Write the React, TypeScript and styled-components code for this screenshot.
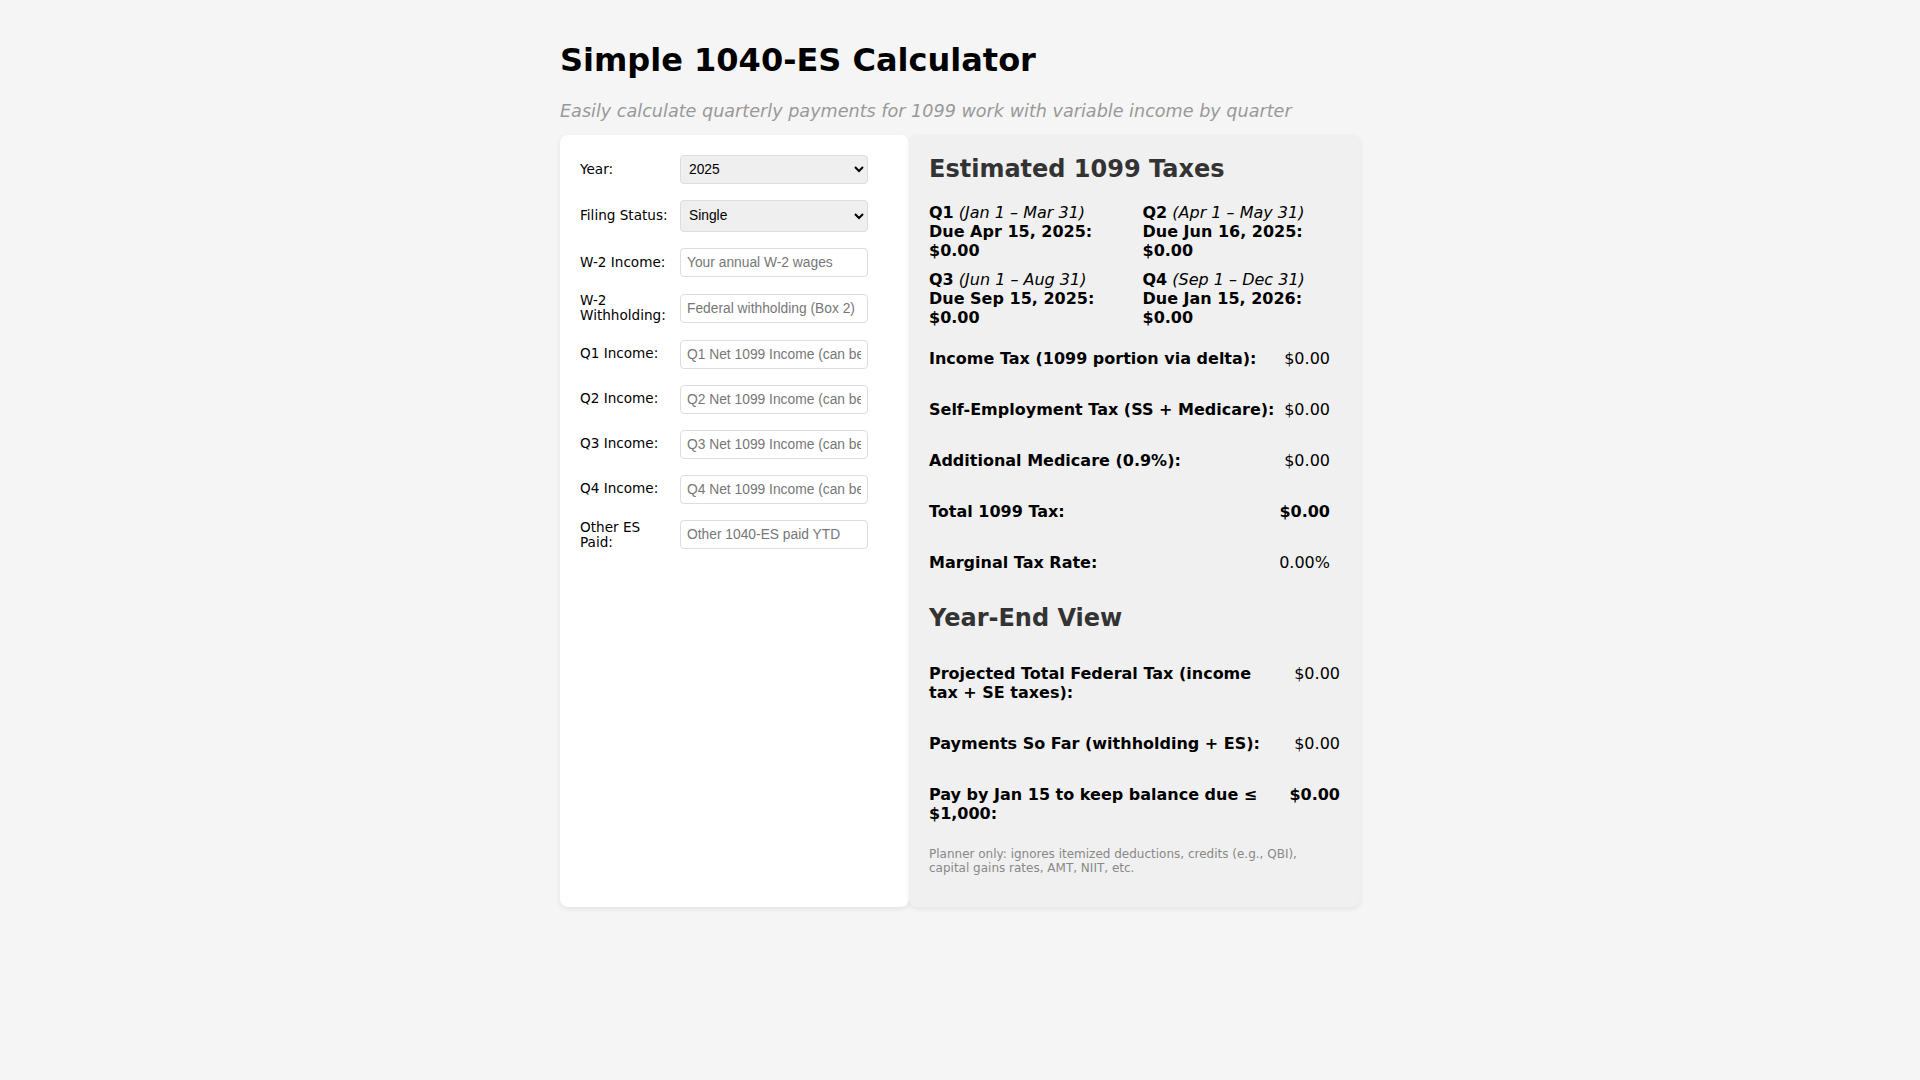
import React from 'react';
import styled, { createGlobalStyle } from 'styled-components';

const GlobalStyle = createGlobalStyle`
  *, *::before, *::after {
    box-sizing: border-box;
  }
  body {
    margin: 0;
    background-color: #f5f5f5;
    font-family: 'DejaVu Sans', sans-serif;
    color: #000;
  }
`;

const Page = styled.div`
  padding: 20px;
`;

const Container = styled.div`
  max-width: 800px;
  margin: 0 auto;
`;

const Title = styled.h1`
  font-size: 32px;
  margin: 0.67em 0;
`;

const Subtitle = styled.p`
  margin: 16px 0 14px;
  color: #999;
  font-style: italic;
  font-size: 17.6px;
`;

const Layout = styled.div`
  display: grid;
  grid-template-columns: 349px 1fr;
  align-items: stretch;
`;

const FormCard = styled.div`
  background-color: #fff;
  padding: 20px;
  border-radius: 8px;
  box-shadow: 0 2px 5px rgba(0, 0, 0, 0.08);
`;

const FieldRow = styled.div`
  display: flex;
  align-items: center;
  margin-bottom: 16px;
`;

const FieldLabel = styled.label`
  width: 90px;
  margin-right: 10px;
  flex-shrink: 0;
  font-size: 13.6px;
  line-height: 1.13;
`;

const Input = styled.input`
  width: 188px;
  height: 29px;
  padding: 0 6px;
  border: 1px solid #ddd;
  border-radius: 4px;
  background-color: #fff;
  font-family: 'Liberation Sans', Arial, sans-serif;
  font-size: 13.8px;
  color: #000;
  &::placeholder {
    color: #777;
  }
`;

const Select = styled.select<{ $tall?: boolean }>`
  width: 188px;
  height: ${(p) => (p.$tall ? '32px' : '29px')};
  padding: 0 4px;
  border: 1px solid #ddd;
  border-radius: 4px;
  background-color: #efefef;
  font-family: 'Liberation Sans', Arial, sans-serif;
  font-size: 13.8px;
  color: #000;
`;

const ResultsPanel = styled.div`
  background-color: #f0f0f0;
  padding: 20px;
  border-radius: 8px;
  box-shadow: 0 2px 5px rgba(0, 0, 0, 0.08);
`;

const SectionTitle = styled.h2`
  font-size: 24px;
  color: #333;
  margin: 0.83em 0;
  &:first-child {
    margin-top: 0;
  }
`;

const QuarterGrid = styled.div`
  display: grid;
  grid-template-columns: 1fr 1fr;
  gap: 10px 16px;
  margin-bottom: 10px;
  font-size: 16px;
`;

const Quarter = styled.div`
  em {
    font-weight: normal;
  }
`;

const DueLine = styled.div`
  font-weight: bold;
`;

const ResultRow = styled.div<{ $trail?: boolean }>`
  display: flex;
  justify-content: space-between;
  padding: 12px ${(p) => (p.$trail ? '10px' : '0')} 12px 0;
  margin: 8px 0;
  font-size: 16px;
`;

const RowLabel = styled.span`
  font-weight: bold;
`;

const RowValue = styled.span<{ $strong?: boolean; $gap: number }>`
  flex-shrink: 0;
  margin-left: ${(p) => p.$gap}px;
  text-align: right;
  font-weight: ${(p) => (p.$strong ? 'bold' : 'normal')};
`;

const Footnote = styled.p`
  margin: 12px 6px 12px 0;
  font-size: 12px;
  color: #888;
`;

const fields = [
  { label: 'W-2 Income:', placeholder: 'Your annual W-2 wages' },
  { label: 'W-2 Withholding:', placeholder: 'Federal withholding (Box 2)' },
  { label: 'Q1 Income:', placeholder: 'Q1 Net 1099 Income (can be negative)' },
  { label: 'Q2 Income:', placeholder: 'Q2 Net 1099 Income (can be negative)' },
  { label: 'Q3 Income:', placeholder: 'Q3 Net 1099 Income (can be negative)' },
  { label: 'Q4 Income:', placeholder: 'Q4 Net 1099 Income (can be negative)' },
  { label: 'Other ES Paid:', placeholder: 'Other 1040-ES paid YTD' },
];

const quarters = [
  { q: 'Q1', range: '(Jan 1 – Mar 31)', due: 'Due Apr 15, 2025:' },
  { q: 'Q2', range: '(Apr 1 – May 31)', due: 'Due Jun 16, 2025:' },
  { q: 'Q3', range: '(Jun 1 – Aug 31)', due: 'Due Sep 15, 2025:' },
  { q: 'Q4', range: '(Sep 1 – Dec 31)', due: 'Due Jan 15, 2026:' },
];

const taxRows = [
  { label: 'Income Tax (1099 portion via delta):', value: '$0.00' },
  { label: 'Self-Employment Tax (SS + Medicare):', value: '$0.00' },
  { label: 'Additional Medicare (0.9%):', value: '$0.00' },
  { label: 'Total 1099 Tax:', value: '$0.00', strong: true },
  { label: 'Marginal Tax Rate:', value: '0.00%' },
];

const yearEndRows = [
  { label: 'Projected Total Federal Tax (income tax + SE taxes):', value: '$0.00' },
  { label: 'Payments So Far (withholding + ES):', value: '$0.00' },
  { label: 'Pay by Jan 15 to keep balance due ≤ $1,000:', value: '$0.00', strong: true },
];

const App = () => {
  return (
    <Page>
      <GlobalStyle />
      <Container>
        <Title>Simple 1040-ES Calculator</Title>
        <Subtitle>Easily calculate quarterly payments for 1099 work with variable income by quarter</Subtitle>
        <Layout>
          <FormCard>
            <FieldRow>
              <FieldLabel htmlFor="year">Year:</FieldLabel>
              <Select id="year" defaultValue="2025">
                <option value="2025">2025</option>
                <option value="2026">2026</option>
              </Select>
            </FieldRow>
            <FieldRow>
              <FieldLabel htmlFor="status">Filing Status:</FieldLabel>
              <Select id="status" $tall defaultValue="single">
                <option value="single">Single</option>
                <option value="mfj">Married Filing Jointly</option>
                <option value="hoh">Head of Household</option>
              </Select>
            </FieldRow>
            {fields.map((f) => (
              <FieldRow key={f.label}>
                <FieldLabel>{f.label}</FieldLabel>
                <Input type="text" placeholder={f.placeholder} />
              </FieldRow>
            ))}
          </FormCard>

          <ResultsPanel>
            <SectionTitle>Estimated 1099 Taxes</SectionTitle>
            <QuarterGrid>
              {quarters.map((q) => (
                <Quarter key={q.q}>
                  <strong>{q.q}</strong> <em>{q.range}</em>
                  <DueLine>{q.due} $0.00</DueLine>
                </Quarter>
              ))}
            </QuarterGrid>
            {taxRows.map((r) => (
              <ResultRow key={r.label} $trail>
                <RowLabel>{r.label}</RowLabel>
                <RowValue $gap={6} $strong={r.strong}>{r.value}</RowValue>
              </ResultRow>
            ))}

            <SectionTitle>Year-End View</SectionTitle>
            {yearEndRows.map((r) => (
              <ResultRow key={r.label}>
                <RowLabel>{r.label}</RowLabel>
                <RowValue $gap={12} $strong={r.strong}>{r.value}</RowValue>
              </ResultRow>
            ))}
            <Footnote>
              Planner only: ignores itemized deductions, credits (e.g., QBI), capital gains rates, AMT, NIIT, etc.
            </Footnote>
          </ResultsPanel>
        </Layout>
      </Container>
    </Page>
  );
};

export default App;
